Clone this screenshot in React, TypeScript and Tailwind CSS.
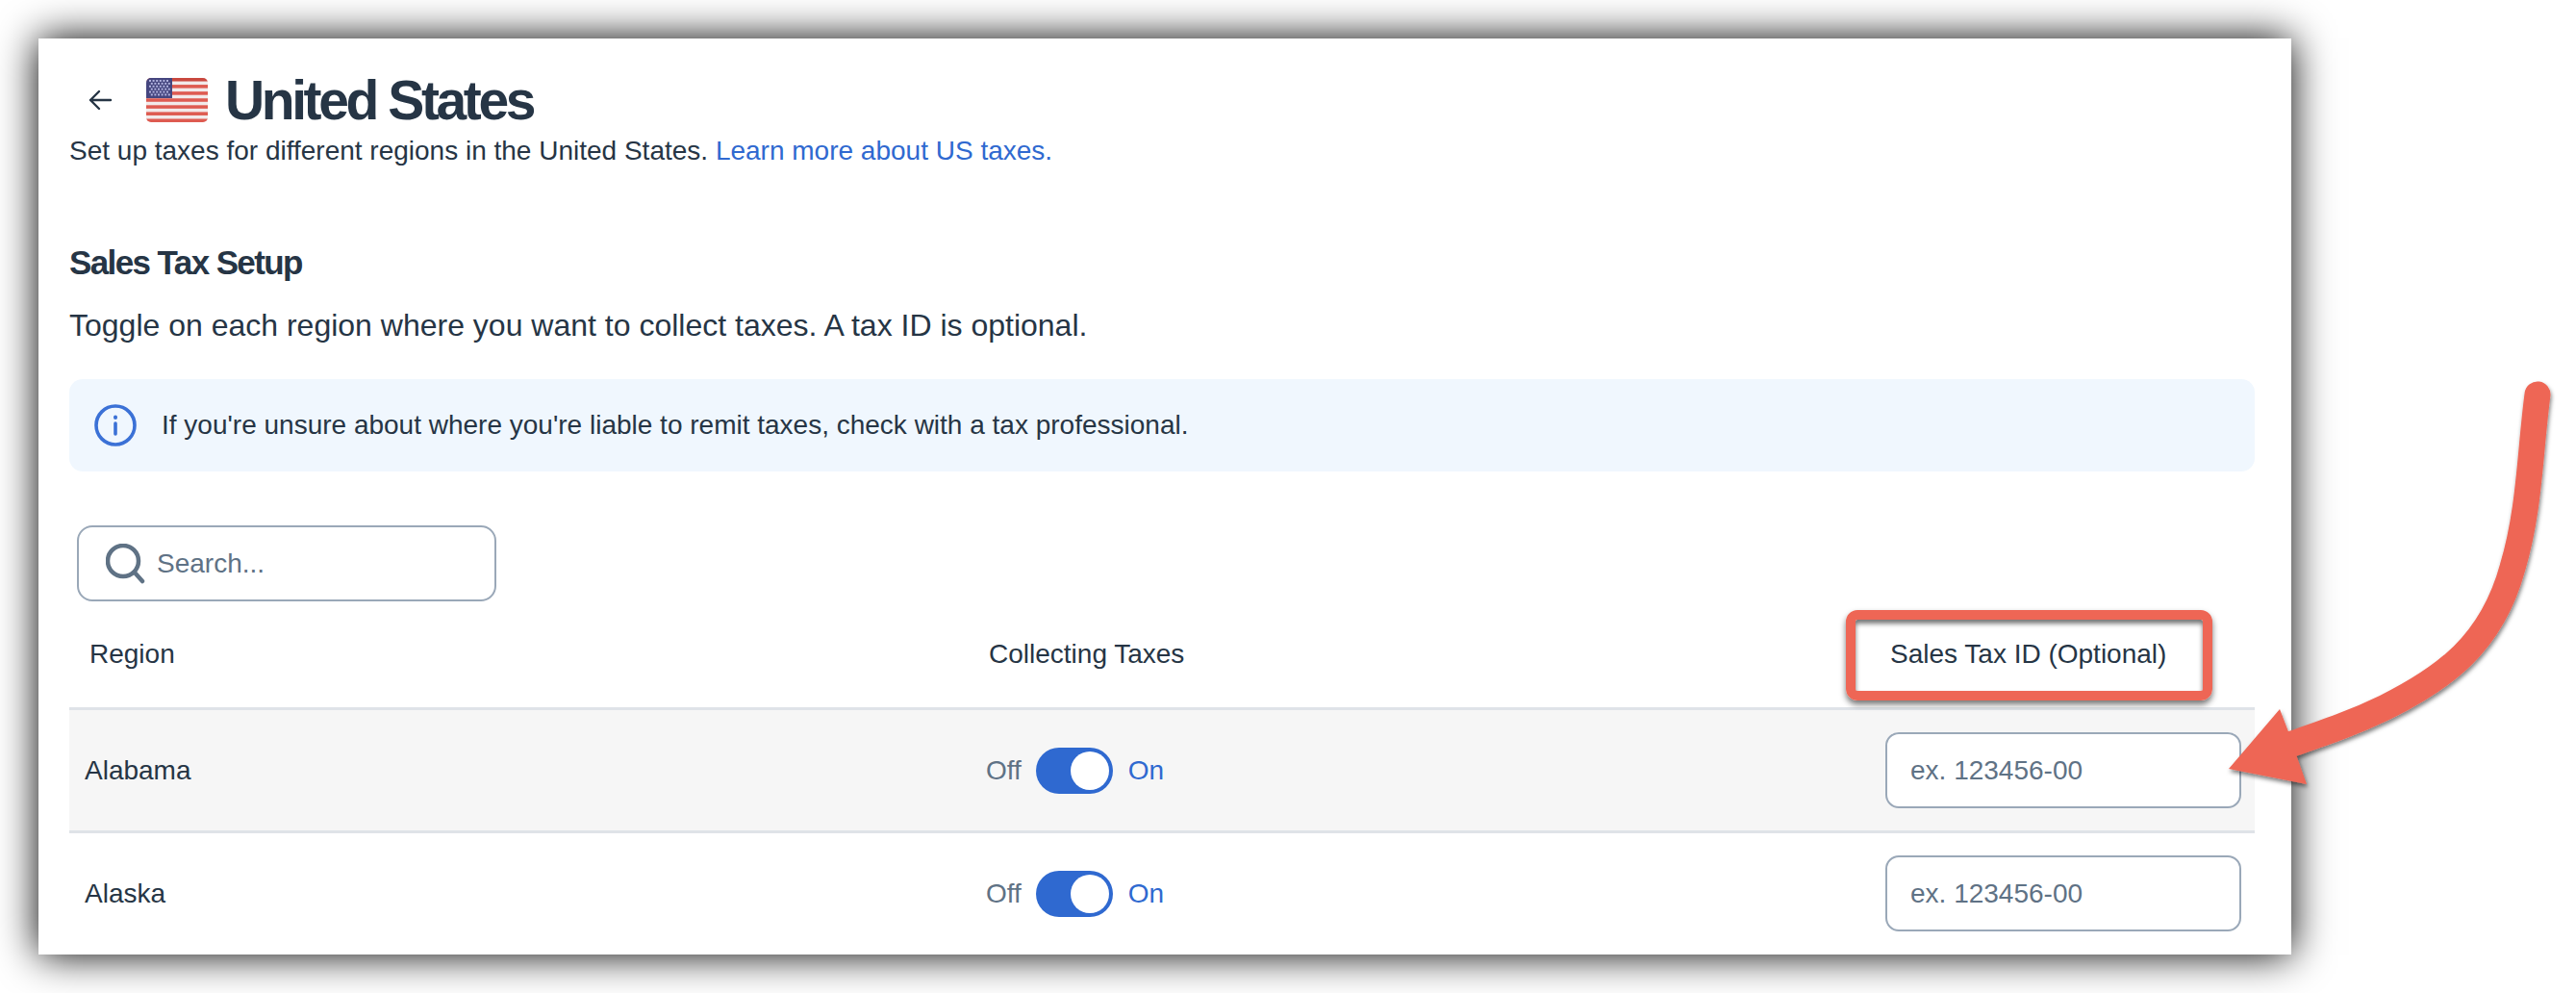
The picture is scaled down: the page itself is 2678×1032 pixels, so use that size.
import React from "react";

function Flag() {
  const stripes = [0, 1, 2, 3, 4, 5, 6];
  return (
    <svg width="64" height="46" viewBox="0 0 64 46" className="shrink-0">
      <defs>
        <clipPath id="flagclip"><rect width="64" height="46" rx="5" /></clipPath>
      </defs>
      <g clipPath="url(#flagclip)">
        <rect width="64" height="46" fill="#f2eaea" />
        {stripes.map((i) => (
          <rect key={i} y={i * 7.08} width="64" height="3.54" fill={i === 0 ? "#c9483f" : "#de5b51"} />
        ))}
        <rect width="27" height="21" fill="#45467f" />
        {Array.from({ length: 6 }).map((_, r) =>
          Array.from({ length: 6 }).map((_, c) => (
            <rect key={`${r}-${c}`} x={3 + c * 3.6 + (r % 2) * 1.8} y={2 + r * 2.9} width="2" height="1.9" fill="#b3b5e0" />
          ))
        )}
      </g>
    </svg>
  );
}

function Toggle() {
  return (
    <div className="flex items-center text-[28px] leading-none">
      <span className="text-[#5f7285]">Off</span>
      <div className="ml-[15px] w-[80px] h-[48px] rounded-full bg-[#2f69d0] flex items-center justify-end pr-[4px]">
        <div className="w-[40px] h-[40px] rounded-full bg-white" />
      </div>
      <span className="ml-[16px] text-[#2f69d0]">On</span>
    </div>
  );
}

function Row({ name, shaded }: { name: string; shaded?: boolean }) {
  return (
    <div className={`flex items-center border-t-[3px] border-[#dfe3e8] h-[128px] ${shaded ? "bg-[#f6f6f6]" : "bg-white"}`}>
      <div className="w-[953px] pl-[16px] text-[28px] text-[#263545]">{name}</div>
      <div className="flex-1"><Toggle /></div>
      <input
        placeholder="ex. 123456-00"
        className="w-[370px] h-[79px] mr-[14px] rounded-[14px] border-2 border-[#9aa8b8] bg-white px-[24px] text-[28px] text-[#263545] placeholder:text-[#5f7285] outline-none"
      />
    </div>
  );
}

export default function App() {
  return (
    <div className="relative w-[2678px] h-[1032px] overflow-hidden bg-white pt-[40px] pl-[40px] font-['Liberation_Sans',Arial,sans-serif]">
      <div className="w-[2342px] h-[952px] overflow-hidden bg-white shadow-[0_0_40px_rgba(0,0,0,1)] pl-[32px] pr-[38px] pt-[34px] text-[#263545]">
        <div className="flex items-center h-[60px]">
          <svg width="28" height="28" viewBox="0 0 28 28" fill="none" stroke="#263545" strokeWidth="2.4" strokeLinecap="round" strokeLinejoin="round" className="ml-[18px] mr-[34px] shrink-0">
            <path d="M25 14H4M13 5l-9 9 9 9" />
          </svg>
          <Flag />
          <h1 className="ml-[18px] text-[57px] leading-[60px] font-bold tracking-[-3.4px]">United States</h1>
        </div>
        <p className="mt-[5px] text-[28px] leading-[36px]">
          Set up taxes for different regions in the United States. <a className="text-[#2f69d0]">Learn more about US taxes.</a>
        </p>
        <h2 className="mt-[78px] text-[35px] leading-[40px] font-bold tracking-[-1.6px]">Sales Tax Setup</h2>
        <p className="mt-[25px] text-[32px] leading-[40px]">Toggle on each region where you want to collect taxes. A tax ID is optional.</p>
        <div className="mt-[36px] h-[96px] rounded-[14px] bg-[#f0f7fe] flex items-center pl-[26px]">
          <svg width="44" height="44" viewBox="0 0 44 44" fill="none" stroke="#3b71d6" strokeWidth="3.6" strokeLinecap="round" className="shrink-0">
            <circle cx="22" cy="22" r="20" />
            <path d="M22 20v11" />
            <path d="M22 13.5v.4" strokeWidth="4" />
          </svg>
          <span className="ml-[26px] text-[28px]">If you're unsure about where you're liable to remit taxes, check with a tax professional.</span>
        </div>
        <div className="mt-[56px] ml-[8px] w-[436px] h-[79px] rounded-[16px] border-2 border-[#9aa8b8] flex items-center pl-[28px]">
          <svg width="42" height="42" viewBox="0 0 42 42" fill="none" stroke="#5f7285" strokeWidth="4.5" strokeLinecap="round" className="shrink-0">
            <circle cx="18" cy="18" r="16" />
            <path d="M30 30l8 9" />
          </svg>
          <input placeholder="Search..." className="ml-[11px] w-[300px] bg-transparent text-[28px] text-[#263545] placeholder:text-[#5f7285] outline-none" />
        </div>
        <div className="flex items-center h-[110px] text-[28px]">
          <div className="w-[956px] pl-[21px] shrink-0">Region</div>
          <div className="flex-1">Collecting Taxes</div>
          <div className="w-[379px] shrink-0">Sales Tax ID (Optional)</div>
        </div>
        <Row name="Alabama" shaded />
        <Row name="Alaska" />
      </div>

      <div className="absolute left-[1919px] top-[634px] w-[381px] h-[94px] rounded-[12px] border-[10px] border-[#ee6655] shadow-[0_4px_6px_rgba(0,0,0,0.55),inset_0_4px_5px_rgba(0,0,0,0.55)]" />

      <svg className="absolute left-0 top-0 pointer-events-none" width="2678" height="1032" viewBox="0 0 2678 1032" fill="none">
        <defs>
          <filter id="arrowShadow" x="-10%" y="-10%" width="120%" height="120%">
            <feDropShadow dx="1" dy="3" stdDeviation="2" floodColor="#000" floodOpacity="0.5" />
          </filter>
        </defs>
        <g filter="url(#arrowShadow)">
          <path d="M2638 410C2630 470 2630 530 2612 590C2590 670 2540 705 2480 735C2445 752 2415 762 2383 773" stroke="#ee6655" strokeWidth="27" strokeLinecap="round" />
          <path d="M2317 799L2370 737L2380 763L2388 787L2398 815Z" fill="#ee6655" />
        </g>
      </svg>
    </div>
  );
}
